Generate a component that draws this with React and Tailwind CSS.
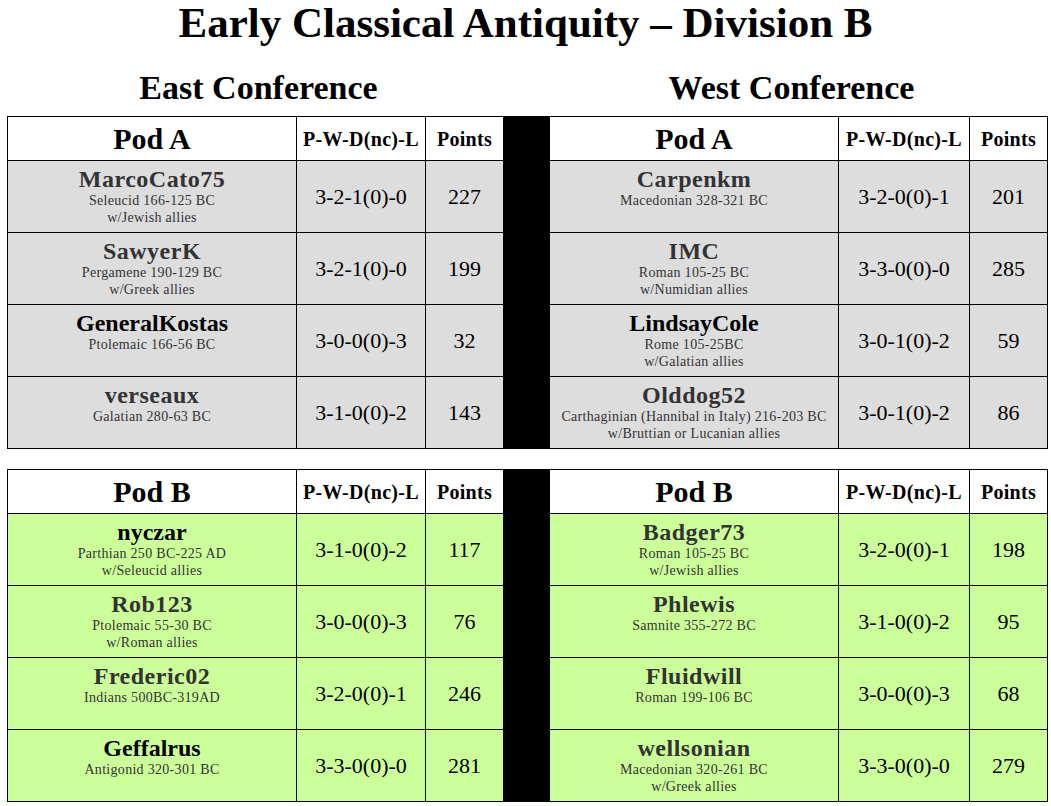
import React from "react";

const podA = {
  name: "Pod A",
  bg: "bg-[#dddddd]",
  east: [
    { player: "MarcoCato75", info: ["Seleucid 166-125 BC", "w/Jewish allies"], rec: "3-2-1(0)-0", pts: "227" },
    { player: "SawyerK", info: ["Pergamene 190-129 BC", "w/Greek allies"], rec: "3-2-1(0)-0", pts: "199" },
    { player: "GeneralKostas", dark: true, info: ["Ptolemaic 166-56 BC"], rec: "3-0-0(0)-3", pts: "32" },
    { player: "verseaux", info: ["Galatian 280-63 BC"], rec: "3-1-0(0)-2", pts: "143" },
  ],
  west: [
    { player: "Carpenkm", info: ["Macedonian 328-321 BC"], rec: "3-2-0(0)-1", pts: "201" },
    { player: "IMC", info: ["Roman 105-25 BC", "w/Numidian allies"], rec: "3-3-0(0)-0", pts: "285" },
    { player: "LindsayCole", dark: true, info: ["Rome 105-25BC", "w/Galatian allies"], rec: "3-0-1(0)-2", pts: "59" },
    { player: "Olddog52", info: ["Carthaginian (Hannibal in Italy) 216-203 BC", "w/Bruttian or Lucanian allies"], rec: "3-0-1(0)-2", pts: "86" },
  ],
};

const podB = {
  name: "Pod B",
  bg: "bg-[#ccff99]",
  east: [
    { player: "nyczar", dark: true, info: ["Parthian 250 BC-225 AD", "w/Seleucid allies"], rec: "3-1-0(0)-2", pts: "117" },
    { player: "Rob123", info: ["Ptolemaic 55-30 BC", "w/Roman allies"], rec: "3-0-0(0)-3", pts: "76" },
    { player: "Frederic02", info: ["Indians 500BC-319AD"], rec: "3-2-0(0)-1", pts: "246" },
    { player: "Geffalrus", dark: true, info: ["Antigonid 320-301 BC"], rec: "3-3-0(0)-0", pts: "281" },
  ],
  west: [
    { player: "Badger73", info: ["Roman 105-25 BC", "w/Jewish allies"], rec: "3-2-0(0)-1", pts: "198" },
    { player: "Phlewis", info: ["Samnite 355-272 BC"], rec: "3-1-0(0)-2", pts: "95" },
    { player: "Fluidwill", info: ["Roman 199-106 BC"], rec: "3-0-0(0)-3", pts: "68" },
    { player: "wellsonian", info: ["Macedonian 320-261 BC", "w/Greek allies"], rec: "3-3-0(0)-0", pts: "279" },
  ],
};

const cell = "border border-black";

const PlayerCells = ({ p, bg }) => (
  <>
    <td className={`${cell} ${bg} h-[72px] align-top text-center pt-[5px]`}>
      <div
        className={`text-[24px] font-bold leading-[27px] ${
          p.dark ? "text-black" : "text-[#333333] tracking-[0.5px]"
        }`}
      >
        {p.player}
      </div>
      {p.info.map((line) => (
        <div key={line} className="text-[14px] leading-[16.5px] tracking-[0.3px] text-[#333333]">
          {line}
        </div>
      ))}
    </td>
    <td className={`${cell} ${bg} text-center text-[22px]`}>{p.rec}</td>
    <td className={`${cell} ${bg} text-center text-[22px]`}>{p.pts}</td>
  </>
);

const HeaderCells = ({ name }) => (
  <>
    <th className={`${cell} bg-white h-[44px] text-[30px] leading-[32px] font-bold`}>{name}</th>
    <th className={`${cell} bg-white text-[20px] leading-[24px] font-bold tracking-[0.3px]`}>P-W-D(nc)-L</th>
    <th className={`${cell} bg-white text-[20px] leading-[24px] font-bold tracking-[0.3px]`}>Points</th>
  </>
);

const PodTable = ({ pod }) => (
  <table className="border-collapse table-fixed w-[1040px]">
    <colgroup>
      <col className="w-[289px]" />
      <col className="w-[129px]" />
      <col className="w-[78px]" />
      <col className="w-[46px]" />
      <col className="w-[289px]" />
      <col className="w-[131px]" />
      <col className="w-[78px]" />
    </colgroup>
    <tbody>
      <tr>
        <HeaderCells name={pod.name} />
        <td rowSpan={5} className="bg-black border border-black" />
        <HeaderCells name={pod.name} />
      </tr>
      {pod.east.map((p, i) => (
        <tr key={p.player}>
          <PlayerCells p={p} bg={pod.bg} />
          <PlayerCells p={pod.west[i]} bg={pod.bg} />
        </tr>
      ))}
    </tbody>
  </table>
);

export default function App() {
  return (
    <div className="bg-white w-[1051px] h-[806px] overflow-hidden font-['Liberation_Serif','Times_New_Roman',serif] text-black">
      <h1 className="text-center text-[43px] font-bold leading-[46px]">
        Early Classical Antiquity – Division B
      </h1>
      <div className="flex pl-[7px] mt-[23px]">
        <div className="w-[496px] pl-[7px] text-center text-[34px] font-bold leading-[38px]">
          East Conference
        </div>
        <div className="w-[46px]" />
        <div className="w-[498px] pr-[13px] text-center text-[34px] font-bold leading-[38px]">
          West Conference
        </div>
      </div>
      <div className="pl-[7px] mt-[9px] flex flex-col gap-[20px]">
        <PodTable pod={podA} />
        <PodTable pod={podB} />
      </div>
    </div>
  );
}
